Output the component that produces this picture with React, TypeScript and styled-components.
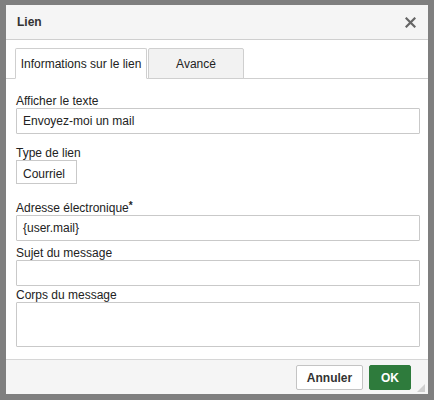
import styled, { createGlobalStyle } from 'styled-components'

const GlobalStyle = createGlobalStyle`
  html, body {
    margin: 0;
    padding: 0;
    background: #7f7f7f;
  }
  * {
    box-sizing: border-box;
  }
`

const Page = styled.div`
  width: 434px;
  height: 400px;
  padding: 5px 0 0 6px;
  font-family: 'Liberation Sans', Arial, sans-serif;
  font-size: 12px;
  color: #222;
`

const Dialog = styled.div`
  width: 422px;
  height: 389px;
  background: #fff;
  display: flex;
  flex-direction: column;
`

const Header = styled.div`
  height: 35px;
  background: #f5f5f5;
  border-bottom: 1px solid #cfcfcf;
  display: flex;
  align-items: center;
  justify-content: space-between;
  padding: 0 12px 0 11px;
  > strong {
    font-size: 12px;
    color: #333;
  }
`

const Close = styled.button`
  border: 0;
  background: none;
  padding: 0;
  width: 12px;
  height: 12px;
  display: flex;
  align-items: center;
  justify-content: center;
  cursor: pointer;
`

const TabBar = styled.div`
  display: flex;
  align-items: flex-end;
  padding: 8px 9px 0;
  border-bottom: 1px solid #cfcfcf;
`

const Tab = styled.div<{ $active?: boolean }>`
  height: 31px;
  margin-bottom: -1px;
  width: ${({ $active }) => ($active ? '132px' : '96px')};
  margin-right: 1px;
  display: flex;
  align-items: center;
  justify-content: center;
  border: 1px solid #cfcfcf;
  border-bottom-color: ${({ $active }) => ($active ? '#fff' : '#cfcfcf')};
  border-radius: 2px 2px 0 0;
  background: ${({ $active }) => ($active ? '#fff' : '#f2f2f2')};
  color: #222;
  font-size: 12px;
`

const Body = styled.div`
  flex: 1;
  padding: 15px 8px 0 10px;
  display: flex;
  flex-direction: column;
`

const Field = styled.div<{ $space: number }>`
  display: flex;
  flex-direction: column;
  align-items: flex-start;
  margin-top: ${({ $space }) => $space}px;
  > label {
    height: 14px;
    line-height: 14px;
    font-size: 12px;
    color: #222;
    sup {
      font-size: 10px;
      font-weight: bold;
      vertical-align: 3px;
      line-height: 0;
    }
  }
`

const Input = styled.div<{ $h?: number }>`
  width: 100%;
  height: ${({ $h }) => $h ?? 26}px;
  border: 1px solid #c9c9c9;
  border-radius: 1px;
  padding: 0 6px;
  display: flex;
  align-items: center;
  font-size: 12px;
  color: #222;
`

const Select = styled.div`
  width: 61px;
  height: 24px;
  border: 1px solid #c9c9c9;
  padding: 4px 6px 0;
  display: flex;
  align-items: center;
  font-size: 12px;
  color: #222;
`

const Footer = styled.div`
  height: 35px;
  background: #f5f5f5;
  border-top: 1px solid #d6d6d6;
  display: flex;
  align-items: flex-start;
  justify-content: flex-end;
  padding: 5px 0 0;
  position: relative;
`

const Button = styled.button<{ $primary?: boolean }>`
  height: 25px;
  width: ${({ $primary }) => ($primary ? '42px' : '67px')};
  margin-left: 6px;
  border: 1px solid ${({ $primary }) => ($primary ? '#2e7b3c' : '#c4c4c4')};
  border-radius: 2px;
  background: ${({ $primary }) => ($primary ? '#2e7b3c' : '#fff')};
  color: ${({ $primary }) => ($primary ? '#fff' : '#333')};
  font-family: 'Liberation Sans', Arial, sans-serif;
  font-weight: bold;
  font-size: 12px;
  padding: 0;
`

const Grip = styled.svg`
  width: 17px;
  height: 30px;
  align-self: flex-end;
`

export default function App() {
  return (
    <Page>
      <GlobalStyle />
      <Dialog>
        <Header>
          <strong>Lien</strong>
          <Close aria-label="Fermer">
            <svg width="11" height="11" viewBox="0 0 11 11">
              <path d="M1.5 1.5 L9.5 9.5 M9.5 1.5 L1.5 9.5" stroke="#666" strokeWidth="2.2" strokeLinecap="square" />
            </svg>
          </Close>
        </Header>
        <TabBar>
          <Tab $active>Informations sur le lien</Tab>
          <Tab>Avancé</Tab>
        </TabBar>
        <Body>
          <Field $space={0}>
            <label>Afficher le texte</label>
            <Input>Envoyez-moi un mail</Input>
          </Field>
          <Field $space={12}>
            <label>Type de lien</label>
            <Select>Courriel</Select>
          </Field>
          <Field $space={17}>
            <label>
              Adresse électronique<sup>*</sup>
            </label>
            <Input>{'{user.mail}'}</Input>
          </Field>
          <Field $space={5}>
            <label>Sujet du message</label>
            <Input />
          </Field>
          <Field $space={2}>
            <label>Corps du message</label>
            <Input $h={45} />
          </Field>
        </Body>
        <Footer>
          <Button>Annuler</Button>
          <Button $primary>OK</Button>
          <Grip viewBox="0 0 17 30">
            <path d="M14 20 L14 28 L6 28 Z" fill="#cfcfcf" />
          </Grip>
        </Footer>
      </Dialog>
    </Page>
  )
}
